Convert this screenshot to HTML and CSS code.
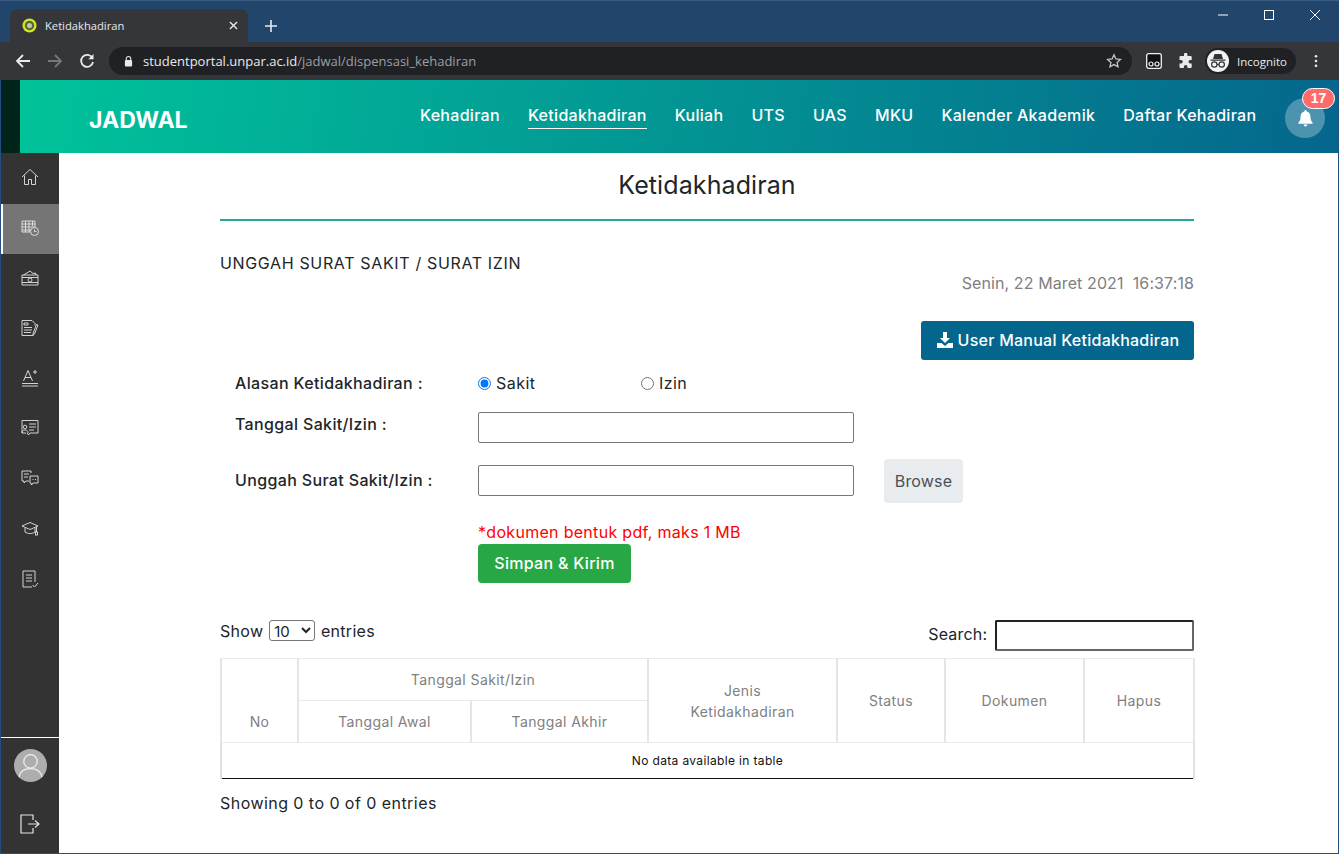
FILE: index.html
```html
<!DOCTYPE html>
<html lang="en">
<head>
    <meta charset="UTF-8">
    <meta name="viewport" content="width=device-width, initial-scale=1.0">
    <title>Ketidakhadiran</title>
    <link rel="stylesheet" href="styles.css">
</head>
<body>
    <div class="browser">
        <div class="tabstrip">
            <div class="tab">
                <svg class="favicon" viewBox="0 0 16 16"><circle cx="8" cy="8" r="7.5" fill="#dfe21a"/><circle cx="8" cy="8" r="5" fill="#3f6b3c"/><circle cx="8" cy="8" r="2.8" fill="#cdbf9a"/></svg>
                <span class="tab-title">Ketidakhadiran</span>
                <svg class="tab-close" viewBox="0 0 10 10"><path d="M1 1l8 8M9 1l-8 8" stroke="#e8eaed" stroke-width="1.5"/></svg>
            </div>
            <svg class="new-tab" viewBox="0 0 12 12"><path d="M6 0v12M0 6h12" stroke="#e8eaed" stroke-width="1.6"/></svg>
            <div class="window-btns">
                <svg viewBox="0 0 12 12"><path d="M1 6h10" stroke="#fff"/></svg>
                <svg viewBox="0 0 12 12"><rect x="1.5" y="1.5" width="9" height="9" fill="none" stroke="#fff"/></svg>
                <svg viewBox="0 0 12 12"><path d="M1 1l10 10M11 1L1 11" stroke="#fff"/></svg>
            </div>
        </div>
        <div class="toolbar">
            <svg class="nav-icon" viewBox="0 0 16 16"><path d="M15 8H2M8 2L2 8l6 6" fill="none" stroke="#e8eaed" stroke-width="1.8"/></svg>
            <svg class="nav-icon" viewBox="0 0 16 16"><path d="M1 8h13M8 2l6 6-6 6" fill="none" stroke="#75777a" stroke-width="1.8"/></svg>
            <svg class="nav-icon" viewBox="0 0 16 16"><path d="M13.4 5A6 6 0 1 0 14 9" fill="none" stroke="#e8eaed" stroke-width="1.8"/><path d="M14.5 1v5.2H9.3z" fill="#e8eaed"/></svg>
            <div class="omnibox">
                <svg class="lock" viewBox="0 0 10 12"><path d="M2.5 5V3.5a2.5 2.5 0 0 1 5 0V5" fill="none" stroke="#e8eaed" stroke-width="1.2"/><rect x="1" y="5" width="8" height="7" rx="1" fill="#e8eaed"/></svg>
                <span class="url"><span class="url-host">studentportal.unpar.ac.id</span>/jadwal/dispensasi_kehadiran</span>
                <svg class="star" viewBox="0 0 16 16"><path d="M8 1.8l1.9 4.1 4.5.5-3.3 3 .9 4.4L8 11.6l-4 2.2.9-4.4-3.3-3 4.500-.5z" fill="none" stroke="#c4c7c5" stroke-width="1.3"/></svg>
            </div>
            <svg class="ext-icon" viewBox="0 0 16 16"><rect x=".7" y=".7" width="14.6" height="14.6" rx="2" fill="#111" stroke="#f1f3f4" stroke-width="1.3"/><circle cx="5" cy="11" r="2" fill="none" stroke="#f1f3f4" stroke-width="1.2"/><circle cx="11" cy="11" r="2" fill="none" stroke="#f1f3f4" stroke-width="1.2"/></svg>
            <svg class="puzzle" viewBox="0 0 16 16"><path d="M6 1.5a1.7 1.7 0 0 1 3.4 0V3h3.3a1 1 0 0 1 1 1v3h-1.4a1.8 1.8 0 0 0 0 3.6h1.4V14a1 1 0 0 1-1 1H9.500v-1.300a1.800 1.800 0 0 0-3.600 0V15H2.500a1 1 0 0 1-1-1v-3.400H3a1.800 1.800 0 0 0 0-3.600H1.500V4a1 1 0 0 1 1-1H6z" fill="#e8eaed"/></svg>
            <div class="profile">
                <span class="profile-pic">
                    <svg viewBox="0 0 22 22"><path d="M7.500 4h7l1.500 5H6zM3.500 9.500h15v1.200h-15z" fill="#333"/><circle cx="7.300" cy="14.500" r="2.700" fill="none" stroke="#333" stroke-width="1.200"/><circle cx="14.700" cy="14.500" r="2.700" fill="none" stroke="#333" stroke-width="1.200"/><path d="M10 14.500h2" stroke="#333"/></svg>
                </span>
                <span class="profile-name">Incognito</span>
            </div>
            <svg class="menu-dots" viewBox="0 0 4 16"><circle cx="2" cy="2.500" r="1.500" fill="#e8eaed"/><circle cx="2" cy="8" r="1.500" fill="#e8eaed"/><circle cx="2" cy="13.500" r="1.500" fill="#e8eaed"/></svg>
        </div>
    </div>

    <div class="page">
        <header class="topbar">
            <div class="topbar-edge"></div>
            <div class="topbar-main">
                <div class="brand">JADWAL</div>
                <nav class="topnav">
                    <a>Kehadiran</a>
                    <a class="active">Ketidakhadiran</a>
                    <a>Kuliah</a>
                    <a>UTS</a>
                    <a>UAS</a>
                    <a>MKU</a>
                    <a>Kalender Akademik</a>
                    <a>Daftar Kehadiran</a>
                </nav>
                <div class="bell">
                    <svg viewBox="0 0 16 18"><path d="M8 0a1.500 1.500 0 0 0-1.400 1.500C4 2.200 2.700 4.400 2.700 7c0 3.600-1 4.800-2.200 6.200V14.500h15v-1.300C14.300 11.800 13.300 10.600 13.300 7c0-2.600-1.300-4.800-3.900-5.500A1.500 1.500 0 0 0 8 0zM6 15.500a2 2 0 0 0 4 0z" fill="#fff"/></svg>
                    <span class="badge">17</span>
                </div>
            </div>
        </header>

        <div class="layout">
            <aside class="sidebar">
                <div class="side-item side-home">
                    <svg viewBox="0 0 18 18"><path d="M1 9l8-7.500L17 9M3.500 7.500V16.500h4v-5h3v5h4V7.500" /></svg>
                </div>
                <div class="side-item active">
                    <svg viewBox="0 0 18 18"><path d="M1 2h13v11H1zM1 5h13M1 8h13M1 11h13M4.500 2v11M8 2v11M11.500 2v5"/><circle cx="13.500" cy="12.500" r="4" fill="#757575"/><path d="M13.500 10.500v2h2"/></svg>
                </div>
                <div class="side-item">
                    <svg viewBox="0 0 18 18"><path d="M1 6h16v10H1zM1 8.500h16M1 13.500h16M2.500 6L9 2l3 2.500 2.500-.5.500 2"/><circle cx="9" cy="11" r="2"/></svg>
                </div>
                <div class="side-item">
                    <svg viewBox="0 0 18 18"><path d="M12.500 16.500H1V1.500h10l3 3v2M3 4h4v2H3zM3 8.500h8M3 11h8M3 13.500h7M17 6l-3.500 9-1.500 1 .2-2L15.500 5.500z"/></svg>
                </div>
                <div class="side-item">
                    <svg viewBox="0 0 18 18"><path d="M2.500 12L7 1.500 11.500 12M4 8.500h6M12 3h4M14 1v4M1 14.500h16M1 17h16"/></svg>
                </div>
                <div class="side-item">
                    <svg viewBox="0 0 18 18"><path d="M5 14H1V1.500h16V14H9l-1.500 2L6 14M8 5h7M8 8h7M8 11h5"/><circle cx="4" cy="8" r="1.800"/><path d="M1 14c0-2 1-3 3-3s3 1 3 3"/></svg>
                </div>
                <div class="side-item">
                    <svg viewBox="0 0 18 18"><path d="M10 4V2H1v10h2v2l2-2h3M3 5h5M3 8h4M9 7h8v7h-5l-1.500 2L10 14H9zM11.500 10.500h1M14 10.500h1"/></svg>
                </div>
                <div class="side-item">
                    <svg viewBox="0 0 18 18"><path d="M1 7l8-3.500L17 7l-8 3.500zM4 9v4c2.500 2 7.500 2 10 0V9M15.500 8v5"/><rect x="14.500" y="13" width="2" height="3"/></svg>
                </div>
                <div class="side-item side-last">
                    <svg viewBox="0 0 18 18"><path d="M11 17H2V1h12v11M5 5h6M5 8h6M5 11h6M11.500 15l2 2 3.500-4"/></svg>
                </div>
                <div class="side-bottom">
                    <div class="avatar">
                        <svg viewBox="0 0 32 32"><circle cx="16" cy="12" r="6.500"/><path d="M5 27c1-6 6-8 11-8s10 2 11 8"/></svg>
                    </div>
                    <div class="side-logout">
                        <svg viewBox="0 0 20 20"><path d="M13 6V1H1v18h12v-5M8 10h11M15 6.500l4 3.500-4 3.500"/></svg>
                    </div>
                </div>
            </aside>

            <main class="content">
                <h1 class="page-title">Ketidakhadiran</h1>
                <div class="title-row">
                    <div class="section-title">UNGGAH SURAT SAKIT / SURAT IZIN</div>
                    <div class="datetime">Senin, 22 Maret 2021&nbsp; 16:37:18</div>
                </div>
                <div class="manual-row">
                    <button class="btn-manual">
                        <svg viewBox="0 0 16 16"><path d="M6 0h4v6h3l-5 5-5-5h3zM0 11h4.500L8 14l3.500-3H16v5H0z" fill="#fff"/></svg>
                        User Manual Ketidakhadiran
                    </button>
                </div>
                <form class="form">
                    <div class="form-row row-radio">
                        <label class="form-label">Alasan Ketidakhadiran :</label>
                        <div class="radio-group">
                            <label class="radio radio-first"><input type="radio" name="alasan" checked> Sakit</label>
                            <label class="radio"><input type="radio" name="alasan"> Izin</label>
                        </div>
                    </div>
                    <div class="form-row row-date">
                        <label class="form-label">Tanggal Sakit/Izin :</label>
                        <input type="text" class="text-input">
                    </div>
                    <div class="form-row row-file">
                        <label class="form-label">Unggah Surat Sakit/Izin :</label>
                        <input type="text" class="text-input">
                        <button type="button" class="btn-browse">Browse</button>
                    </div>
                    <div class="form-action">
                        <div class="hint">*dokumen bentuk pdf, maks 1 MB</div>
                        <button type="button" class="btn-save">Simpan &amp; Kirim</button>
                    </div>
                </form>
                <div class="table-tools">
                    <div class="length">Show
                        <select><option>10</option></select>
                        entries</div>
                    <div class="search">Search: <input type="text" class="search-input"></div>
                </div>
                <table class="data-table">
                    <colgroup>
                        <col class="w-no">
                        <col class="w-awal">
                        <col class="w-akhir">
                        <col class="w-jenis">
                        <col class="w-status">
                        <col class="w-dokumen">
                        <col class="w-hapus">
                    </colgroup>
                    <thead>
                        <tr>
                            <th rowspan="2" class="col-no">No</th>
                            <th colspan="2">Tanggal Sakit/Izin</th>
                            <th rowspan="2">Jenis<br>Ketidakhadiran</th>
                            <th rowspan="2">Status</th>
                            <th rowspan="2">Dokumen</th>
                            <th rowspan="2">Hapus</th>
                        </tr>
                        <tr>
                            <th>Tanggal Awal</th>
                            <th>Tanggal Akhir</th>
                        </tr>
                    </thead>
                    <tbody>
                        <tr><td colspan="7">No data available in table</td></tr>
                    </tbody>
                </table>
                <div class="table-info">Showing 0 to 0 of 0 entries</div>
            </main>
        </div>
    </div>
</body>
</html>
```

FILE: styles.css
```css
html, body {
    margin: 0;
    padding: 0;
    height: 100%;
    overflow: hidden;
}
body {
    font-family: Inter, "Liberation Sans", sans-serif;
    font-size: 16px;
    color: #212529;
    background-color: #215080;
    display: flex;
    flex-direction: column;
    height: 854px;
    box-sizing: border-box;
    padding: 0 1px 1px;
}
svg {
    display: block;
}

/* browser chrome */
.browser {
    flex: none;
    margin: 0 -1px;
    font-family: "Open Sans", sans-serif;
}
.tabstrip {
    height: 42px;
    background-color: #21456b;
    border-top: 1px solid #3a5d82;
    box-sizing: border-box;
    display: flex;
    align-items: flex-end;
    position: relative;
}
.tab {
    width: 238px;
    height: 33px;
    margin-left: 10px;
    background-color: #35363a;
    border-radius: 8px 8px 0 0;
    display: flex;
    align-items: center;
    box-sizing: border-box;
    padding: 0 10px 0 12px;
    color: #e8eaed;
    font-size: 11.2px;
}
.favicon {
    width: 15px;
    height: 15px;
}
.tab-title {
    margin-left: 8px;
    flex: 1;
}
.tab-close {
    width: 9px;
    height: 9px;
}
.new-tab {
    width: 12px;
    height: 12px;
    margin: 0 0 10px 17px;
}
.window-btns {
    position: absolute;
    top: 8px;
    right: 18px;
    display: flex;
    gap: 34px;
}
.window-btns svg {
    width: 12px;
    height: 12px;
}
.toolbar {
    height: 38px;
    background-color: #35363a;
    display: flex;
    align-items: center;
    box-sizing: border-box;
    padding: 0 14px 0 15px;
}
.nav-icon {
    width: 16px;
    height: 16px;
    margin-right: 16px;
}
.omnibox {
    width: 1023px;
    height: 28px;
    margin-left: -2px;
    background-color: #202124;
    border-radius: 14px;
    display: flex;
    align-items: center;
    box-sizing: border-box;
    padding: 0 10px 0 15px;
    font-size: 13px;
    color: #9aa0a6;
}
.lock {
    width: 9px;
    height: 12px;
    margin-right: 10px;
}
.url {
    flex: 1;
}
.url-host {
    color: #e8eaed;
}
.star {
    width: 16px;
    height: 16px;
}
.ext-icon {
    width: 16px;
    height: 16px;
    margin-left: 14px;
}
.puzzle {
    width: 16px;
    height: 16px;
    margin-left: 16px;
}
.profile {
    width: 91px;
    height: 26px;
    margin-left: 11px;
    background-color: #202124;
    border-radius: 13px;
    display: flex;
    align-items: center;
    box-sizing: border-box;
    padding-left: 2px;
    color: #e8eaed;
    font-size: 11.5px;
}
.profile-pic {
    width: 22px;
    height: 22px;
    background-color: #f1f3f4;
    border-radius: 50%;
    margin-right: 8px;
}
.menu-dots {
    width: 4px;
    height: 14px;
    margin-left: 18px;
}

/* page */
.page {
    flex: 1;
    display: flex;
    flex-direction: column;
    min-height: 0;
    background-color: white;
}
.topbar {
    height: 73px;
    flex: none;
    display: flex;
}
.topbar-edge {
    width: 19px;
    background-color: #002419;
}
.topbar-main {
    flex: 1;
    display: flex;
    align-items: center;
    background: linear-gradient(100deg, #00c39a, #05668d);
    padding-left: 69px;
    padding-right: 13px;
    color: white;
    position: relative;
}
.brand {
    font-size: 23px;
    font-weight: 700;
    width: 331px;
    margin-top: 6px;
}
.topnav {
    display: flex;
    gap: 28px;
    font-size: 16px;
    font-weight: 500;
    letter-spacing: 0.3px;
    flex: 1;
}
.topnav a {
    padding-bottom: 3px;
    border-bottom: 1px solid transparent;
}
.topnav a.active {
    border-bottom-color: white;
}
.bell {
    width: 40px;
    height: 40px;
    border-radius: 50%;
    background-color: #4c93b0;
    display: flex;
    align-items: center;
    justify-content: center;
    position: relative;
    margin-top: 3px;
}
.bell svg {
    width: 15px;
    height: 17px;
}
.badge {
    position: absolute;
    top: -10px;
    right: -10px;
    width: 33px;
    height: 21px;
    box-sizing: border-box;
    border: 1px solid white;
    border-radius: 11px;
    background-color: #ff6b6b;
    color: white;
    font-size: 14px;
    font-weight: 700;
    font-family: "Liberation Sans", sans-serif;
    text-align: center;
    line-height: 19px;
}

.layout {
    flex: 1;
    display: flex;
    min-height: 0;
}
.sidebar {
    width: 58px;
    flex: none;
    background-color: #333333;
    display: flex;
    flex-direction: column;
    padding-top: 1px;
}
.side-item {
    height: 50px;
    display: flex;
    align-items: center;
    justify-content: center;
    box-sizing: border-box;
    padding-bottom: 2px;
}
.side-home {
    padding-bottom: 4px;
}
.side-last {
    padding-bottom: 0;
}
.side-item.active {
    background-color: #757575;
    border-left: 2px solid white;
    padding-right: 2px;
}
.side-item svg, .side-logout svg {
    width: 18px;
    height: 18px;
    fill: none;
    stroke: #e4e4e4;
    stroke-width: 0.9;
}
.side-bottom {
    margin-top: auto;
    border-top: 1px solid white;
    height: 116px;
    box-sizing: border-box;
    display: flex;
    flex-direction: column;
    align-items: center;
    padding-top: 11px;
}
.avatar {
    width: 33px;
    height: 33px;
    border-radius: 50%;
    background-color: #adadad;
}
.avatar svg {
    width: 33px;
    height: 33px;
    fill: none;
    stroke: #eeeeee;
    stroke-width: 1.2;
}
.side-logout {
    margin-top: 32px;
}
.side-logout svg {
    width: 20px;
    height: 20px;
    stroke-width: 1.2;
}

.content {
    flex: 1;
    padding: 0 144px 0 161px;
    min-width: 0;
    letter-spacing: 0.45px;
}
.page-title {
    margin: 0;
    height: 68px;
    box-sizing: border-box;
    padding-top: 18px;
    font-size: 25px;
    font-weight: 400;
    letter-spacing: 0.1px;
    text-align: center;
    color: #212529;
    border-bottom: 2px solid #26a69a;
    line-height: 29px;
}
.title-row {
    position: relative;
    height: 70px;
}
.section-title {
    position: absolute;
    top: 33px;
    left: 0;
    line-height: 18px;
    letter-spacing: 0.65px;
}
.datetime {
    position: absolute;
    top: 53px;
    right: 0;
    color: #808080;
    line-height: 18px;
    letter-spacing: 0.1px;
}
.manual-row {
    display: flex;
    justify-content: flex-end;
    margin-top: 30px;
}
.btn-manual {
    height: 39px;
    width: 273px;
    border: none;
    border-radius: 3px;
    background-color: #05668d;
    color: white;
    font-family: inherit;
    font-size: 16px;
    font-weight: 500;
    letter-spacing: 0.25px;
    display: flex;
    align-items: center;
    justify-content: center;
    gap: 5px;
    padding: 0 0 1px 1px;
}
.btn-manual svg {
    width: 16px;
    height: 16px;
}
.form {
    padding-left: 15px;
}
.form-row {
    display: flex;
    align-items: flex-start;
}
.form-label {
    width: 243px;
    flex: none;
    font-weight: 500;
    letter-spacing: 0.35px;
    line-height: 20px;
}
.row-radio {
    height: 52px;
    padding-top: 13px;
    box-sizing: border-box;
}
.radio-group {
    display: flex;
}
.radio {
    display: flex;
    align-items: center;
    line-height: 20px;
}
.radio-first {
    width: 163px;
}
.radio input {
    margin: 0 5px 0 0;
    width: 13px;
    height: 13px;
}
.row-date {
    height: 53px;
}
.row-date .form-label {
    padding-top: 2px;
}
.row-file .form-label {
    padding-top: 5px;
}
.text-input {
    width: 376px;
    height: 31px;
    box-sizing: border-box;
    border: 1px solid #767676;
    border-radius: 2px;
    padding: 0;
    flex: none;
}
.btn-browse {
    width: 79px;
    height: 44px;
    margin: -6px 0 0 30px;
    border: none;
    border-radius: 4px;
    background-color: #e9ecef;
    color: #495057;
    font-family: inherit;
    font-size: 16px;
    letter-spacing: 0.15px;
    padding: 0;
}
.form-action {
    padding: 19px 0 0 243px;
}
.hint {
    color: #ff0000;
    line-height: 20px;
    margin-bottom: 2px;
    letter-spacing: 0.3px;
}
.btn-save {
    display: block;
    width: 153px;
    height: 39px;
    border: none;
    border-radius: 4px;
    background-color: #28a745;
    color: white;
    font-family: inherit;
    font-size: 16px;
    font-weight: 500;
    letter-spacing: 0.3px;
    padding: 0 0 2px;
}
.table-tools {
    display: flex;
    justify-content: space-between;
    margin-top: 36px;
    height: 39px;
}
.length {
    padding-top: 1px;
    letter-spacing: 0.3px;
}
.length select {
    font-family: inherit;
    font-size: 15px;
    height: 21px;
    width: 46px;
    margin: 0 1px;
    background-color: white;
    color: #212529;
    border: 1px solid #767676;
    border-radius: 3px;
}
.search-input {
    width: 199px;
    height: 31px;
    box-sizing: border-box;
    border: 2px solid #222;
    border-right-color: #666;
    border-bottom-color: #666;
    border-radius: 2px;
    padding: 0;
    margin-left: 3px;
}
.search {
    margin-top: 1px;
    letter-spacing: 0.2px;
}
.data-table {
    width: 973px;
    table-layout: fixed;
    border-collapse: collapse;
    border-top: 1px solid #e3e6ea;
    border-left: 2px solid #dee2e6;
    border-right: 2px solid #dee2e6;
    border-bottom: 1px solid #111;
    font-size: 14px;
    letter-spacing: 0.4px;
}
.w-no { width: 77px; }
.w-awal { width: 173px; }
.w-akhir { width: 177px; }
.w-jenis { width: 189px; }
.w-status { width: 108px; }
.w-dokumen { width: 139px; }
.w-hapus { width: 110px; }
.data-table th {
    font-weight: 400;
    color: #808080;
    border-top: 1px solid #e8eaee;
    border-bottom: 1px solid #e8eaee;
    border-left: 2px solid #e2e5e9;
    border-right: 2px solid #e2e5e9;
    text-align: center;
    height: 42px;
    padding: 0;
    box-sizing: border-box;
    line-height: 21px;
}
.data-table .col-no {
    vertical-align: bottom;
    padding-bottom: 10px;
}
.data-table td {
    text-align: center;
    font-size: 12px;
    letter-spacing: 0.35px;
    height: 36px;
    padding: 0 0 1px;
    box-sizing: border-box;
    color: #111;
}
.table-info {
    margin-top: 14px;
}
```
